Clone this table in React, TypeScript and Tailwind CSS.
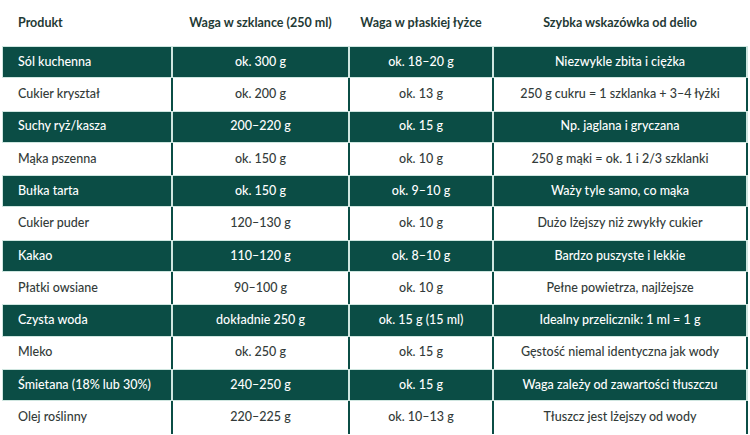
import React from 'react';

type Row = [string, string, string, string];

const rows: Row[] = [
    ['Sól kuchenna', 'ok. 300 g', 'ok. 18–20 g', 'Niezwykle zbita i ciężka'],
    ['Cukier kryształ', 'ok. 200 g', 'ok. 13 g', '250 g cukru = 1 szklanka + 3–4 łyżki'],
    ['Suchy ryż/kasza', '200–220 g', 'ok. 15 g', 'Np. jaglana i gryczana'],
    ['Mąka pszenna', 'ok. 150 g', 'ok. 10 g', '250 g mąki = ok. 1 i 2/3 szklanki'],
    ['Bułka tarta', 'ok. 150 g', 'ok. 9–10 g', 'Waży tyle samo, co mąka'],
    ['Cukier puder', '120–130 g', 'ok. 10 g', 'Dużo lżejszy niż zwykły cukier'],
    ['Kakao', '110–120 g', 'ok. 8–10 g', 'Bardzo puszyste i lekkie'],
    ['Płatki owsiane', '90–100 g', 'ok. 10 g', 'Pełne powietrza, najlżejsze'],
    ['Czysta woda', 'dokładnie 250 g', 'ok. 15 g (15 ml)', 'Idealny przelicznik: 1 ml = 1 g'],
    ['Mleko', 'ok. 250 g', 'ok. 15 g', 'Gęstość niemal identyczna jak wody'],
    ['Śmietana (18% lub 30%)', '240–250 g', 'ok. 15 g', 'Waga zależy od zawartości tłuszczu'],
    ['Olej roślinny', '220–225 g', 'ok. 10–13 g', 'Tłuszcz jest lżejszy od wody'],
];

const cols = 'grid grid-cols-[169px_175px_142px_252px] gap-x-[2px]';

export default function App() {
    return (
        <div className="w-[750px] h-[435px] overflow-hidden bg-white px-[2px] font-['Lato','Liberation_Sans',sans-serif]">
            <div className={`${cols} h-[46px] items-center text-[12.5px] font-bold text-[#1f3a35]`}>
                <div className="pl-4">Produkt</div>
                <div className="text-center">Waga w szklance (250 ml)</div>
                <div className="text-center">Waga w płaskiej łyżce</div>
                <div className="text-center">Szybka wskazówka od delio</div>
            </div>
            {rows.map((row, i) => {
                const dark = i % 2 === 0;
                return (
                    <div
                        key={row[0]}
                        className={
                            dark
                                ? `${cols} h-[32.3px] bg-[#cfe6e0] text-white outline outline-1 -outline-offset-1 outline-[#cfe6e0]`
                                : `${cols} h-[32.3px] bg-[#0b4d45] text-[#333b39]`
                        }
                    >
                        {row.map((cell, j) => (
                            <div
                                key={j}
                                className={`flex items-center text-[12.5px] font-medium ${dark ? 'bg-[#0b4d45]' : 'bg-white'} ${j === 0 ? 'pl-4' : 'justify-center'}`}
                            >
                                {cell}
                            </div>
                        ))}
                    </div>
                );
            })}
        </div>
    );
}
